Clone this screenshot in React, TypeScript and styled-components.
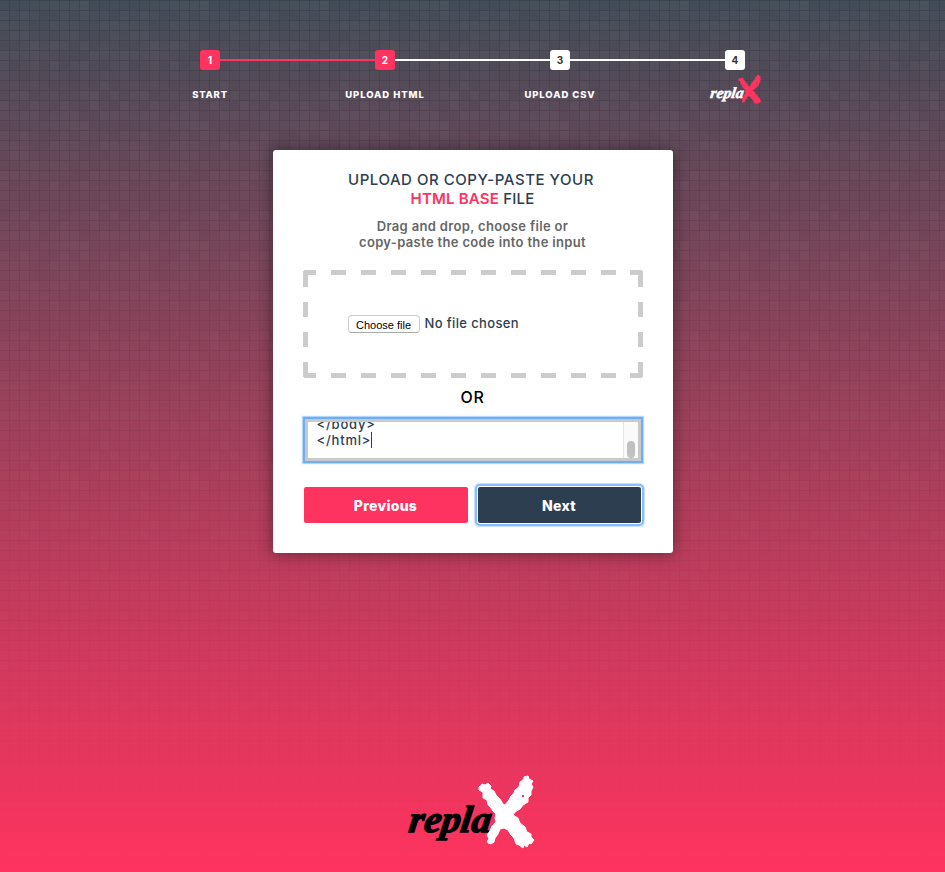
import React from "react";
import styled, { createGlobalStyle, css } from "styled-components";

const GlobalStyle = createGlobalStyle`
  * { box-sizing: border-box; }
  html, body, #root { margin: 0; height: 100%; }
  body { overflow: hidden; font-family: Inter, "Open Sans", sans-serif; }
`;

const PINK = "#ff335f";
const NAVY = "#2c3e50";
const TILE = 120;

const shade = (column: number, row: number) =>
  ((column * 37 + row * 61 + column * row * 23 + ((column * row) % 5) * 17) % 9) / 9;

const cells = Array.from({ length: 144 }, (_, i) => {
  const column = i % 12;
  const row = Math.floor(i / 12);
  const opacity = (shade(column, row) * 0.04).toFixed(3);
  return `<rect x="${column * 10}" y="${row * 10 + 1}" width="9" height="9" fill="#fff" fill-opacity="${opacity}"/>`;
}).join("");
const lines = Array.from(
  { length: 12 },
  (_, i) =>
    `<rect x="${i * 10 + 9}" width="1" height="120" fill-opacity=".08"/><rect y="${i * 10}" width="120" height="1" fill-opacity=".08"/>`
).join("");
const texture = encodeURIComponent(
  `<svg xmlns="http://www.w3.org/2000/svg" width="${TILE}" height="${TILE}">${cells}${lines}</svg>`
);

const Page = styled.main`
  position: relative;
  z-index: 0;
  height: 872px;
  display: flex;
  flex-direction: column;
  align-items: center;
  background: linear-gradient(#414c57, ${PINK});
  &::before {
    content: "";
    position: absolute;
    inset: 0;
    z-index: -1;
    background: url("data:image/svg+xml,${texture}");
    mask-image: linear-gradient(#000, transparent);
  }
`;

const Steps = styled.ol`
  list-style: none;
  margin: 50px 0 0;
  padding: 0;
  width: 700px;
  height: 100px;
  display: grid;
  grid-template-columns: repeat(4, 175px);
`;

const Step = styled.li<{ $active?: boolean; $first?: boolean }>`
  position: relative;
  display: flex;
  flex-direction: column;
  align-items: center;
  ${(p) =>
    !p.$first &&
    css`
      &::before {
        content: "";
        position: absolute;
        left: -78px;
        top: 9px;
        width: 156px;
        height: 2px;
        background: ${p.$active ? PINK : "#fff"};
      }
    `}
`;

const StepNumber = styled.span<{ $active?: boolean }>`
  position: relative;
  width: 20px;
  height: 20px;
  border-radius: 3px;
  font: 700 10px/20px Inter, sans-serif;
  text-align: center;
  color: ${(p) => (p.$active ? "#fff" : "#333")};
  background: ${(p) => (p.$active ? PINK : "#fff")};
`;

const StepLabel = styled.span<{ $spacing: number }>`
  margin-top: 19px;
  font-size: 9.5px;
  line-height: 12px;
  font-weight: 800;
  color: #fff;
  white-space: nowrap;
  letter-spacing: ${(p) => p.$spacing}px;
`;

const StepLogo = styled.div`
  margin: 4px 0 0 1px;
  height: 32px;
`;

const Card = styled.section`
  width: 400px;
  height: 403px;
  padding: 20px 30px 30px;
  display: flex;
  flex-direction: column;
  align-items: center;
  background: #fff;
  border-radius: 3px;
  box-shadow: 0 0 15px 1px rgba(0, 0, 0, 0.4);
  text-align: center;
`;

const Title = styled.h2`
  margin: 0 0 10px;
  height: 38px;
  font-size: 15px;
  line-height: 19px;
  font-weight: 500;
  color: ${NAVY};
  letter-spacing: 0.2px;
  white-space: nowrap;
`;

const TitleLead = styled.span`
  margin-right: 3px;
  letter-spacing: 0.53px;
`;

const Accent = styled.span`
  color: ${PINK};
  font-weight: 600;
`;

const Subtitle = styled.h3`
  margin: 0 0 20px;
  height: 32px;
  font-size: 13px;
  line-height: 16px;
  font-weight: 600;
  color: #666;
  letter-spacing: 0.34px;
  white-space: nowrap;
`;

const DropZone = styled.label`
  position: relative;
  width: 340px;
  height: 108px;
  padding: 0 45px;
  display: flex;
  align-items: center;
  gap: 5px;
`;

const DashFrame = styled.svg`
  position: absolute;
  inset: 0;
`;

const FileButton = styled.span`
  width: 72px;
  height: 18px;
  border: 1px solid #ccc;
  border-bottom-color: #aaa;
  border-radius: 4px;
  font: 11px/18px "Liberation Sans", sans-serif;
  color: #000;
  text-align: center;
`;

const FileName = styled.span`
  margin-bottom: 2px;
  font-size: 13px;
  line-height: 16px;
  font-weight: 500;
  letter-spacing: 0.36px;
  color: ${NAVY};
  white-space: nowrap;
`;

const Or = styled.div`
  margin: 10px 0 11px;
  height: 20px;
  font-size: 16px;
  line-height: 19px;
  font-weight: 500;
  letter-spacing: 0.6px;
  color: #000;
`;

const CodeBox = styled.div`
  flex: none;
  width: 336px;
  height: 42px;
  border: 3px solid #c9c9c9;
  background: #fff;
  box-shadow: 0 0 0 2px #6eaef5, 0 0 1px 3px #b5d6fb;
  display: flex;
  overflow: hidden;
`;

const Code = styled.div`
  flex: 1;
  height: 36px;
  padding: 0 0 10px 9px;
  display: flex;
  flex-direction: column;
  justify-content: flex-end;
  font-size: 13px;
  line-height: 16px;
  font-weight: 500;
  letter-spacing: 0.8px;
  color: ${NAVY};
  text-align: left;
`;

const CodeLine = styled.div`
  display: flex;
  height: 16px;
  flex: none;
  white-space: nowrap;
`;

const Caret = styled.span`
  width: 1px;
  height: 16px;
  background: ${NAVY};
`;

const ScrollTrack = styled.div`
  width: 15px;
  padding: 19px 3px 0;
  border-left: 1px solid #e4e4e4;
  background: #fafafa;
`;

const ScrollThumb = styled.div`
  width: 8px;
  height: 17px;
  border-radius: 4px;
  background: #c1c1c1;
`;

const Buttons = styled.div`
  display: grid;
  grid-template-columns: 164px 163px;
  gap: 10px;
  margin-top: 26px;
  width: 338px;
`;

const Button = styled.button<{ $focused?: boolean }>`
  height: 36px;
  padding: 0;
  border: 0;
  border-radius: 2px;
  background: ${(p) => (p.$focused ? NAVY : PINK)};
  color: #fff;
  font: 800 14px/37px Inter, sans-serif;
  letter-spacing: 0.3px;
  ${(p) => p.$focused && "box-shadow: 0 0 0 1px #fff, 0 0 0 3px #86bdfb, 0 0 1px 3.5px #c5defc;"}
`;

const FooterLogo = styled.footer`
  margin: 221px 3px 0 0;
  height: 76px;
`;

const LogoDrawing = styled.svg`
  display: block;
  overflow: visible;
`;

function Logo({ width, word, mark }: { width: number; word: string; mark: string }) {
  return (
    <LogoDrawing width={width} height={width * 0.6} viewBox="0 0 130 78" role="img" aria-label="replaX">
      <text
        x="2" y="58" fill={word} stroke={word} strokeWidth="1.3" transform="translate(8 0) skewX(-8)"
        fontFamily="'Liberation Serif', serif" fontWeight="700" fontStyle="italic"
        fontSize="38" textLength="82" lengthAdjust="spacingAndGlyphs"
      >repla</text>
      <path fill={mark} stroke={mark} strokeWidth="1" fillRule="evenodd" d="M73 13L76 10L79 11L82 9L85 12L84 15L88 17L90 21L94 25L97 30L99 31L103 26L105 22L108 19L109 16L113 13L114 8L118 5L118 3L122 2L123 5L127 7L125 10L127 13L125 17L125 21L122 24L122 28L117 31L114 35L109 38L107 41L112 44L114 49L119 53L121 58L125 60L125 63L128 66L125 70L123 69L121 73L118 71L117 74L113 71L110 70L108 64L105 61L102 56L98 54L94 55L92 60L89 64L88 68L85 70L82 69L81 67L83 65L81 61L84 57L86 52L90 48L89 44L90 40L87 37L85 34L82 31L81 26L77 24L77 18L73 16ZM117 20L115 22L117 24L119 22Z" />
    </LogoDrawing>
  );
}

export default function App() {
  return (
    <>
      <GlobalStyle />
      <Page>
        <Steps>
          <Step $active $first><StepNumber $active>1</StepNumber><StepLabel $spacing={0.75}>START</StepLabel></Step>
          <Step $active><StepNumber $active>2</StepNumber><StepLabel $spacing={0.95}>UPLOAD HTML</StepLabel></Step>
          <Step><StepNumber>3</StepNumber><StepLabel $spacing={0.92}>UPLOAD CSV</StepLabel></Step>
          <Step><StepNumber>4</StepNumber><StepLogo><Logo width={53} word="#fff" mark={PINK} /></StepLogo></Step>
        </Steps>
        <Card>
          <Title><TitleLead>UPLOAD OR COPY-PASTE YOUR</TitleLead><br /><Accent>HTML BASE</Accent> FILE</Title>
          <Subtitle>Drag and drop, choose file or<br />copy-paste the code into the input</Subtitle>
          <DropZone>
            <DashFrame width="340" height="108" fill="none" stroke="#ccc" strokeWidth="5">
              <path d="M1 2.5H13M327 2.5H339M1 105.5H13M327 105.5H339" />
              <path d="M28 2.5H313M28 105.5H313" strokeDasharray="15 15" />
              <path d="M2.5 1V17M2.5 92V107M337.5 1V17M337.5 92V107" />
              <path d="M2.5 32V77M337.5 32V77" strokeDasharray="15 15" />
            </DashFrame>
            <FileButton>Choose file</FileButton>
            <FileName>No file chosen</FileName>
          </DropZone>
          <Or>OR</Or>
          <CodeBox>
            <Code>
              <CodeLine>&lt;/body&gt;</CodeLine>
              <CodeLine>&lt;/html&gt;<Caret /></CodeLine>
            </Code>
            <ScrollTrack><ScrollThumb /></ScrollTrack>
          </CodeBox>
          <Buttons>
            <Button>Previous</Button>
            <Button $focused>Next</Button>
          </Buttons>
        </Card>
        <FooterLogo><Logo width={130} word="#000" mark="#fff" /></FooterLogo>
      </Page>
    </>
  );
}
